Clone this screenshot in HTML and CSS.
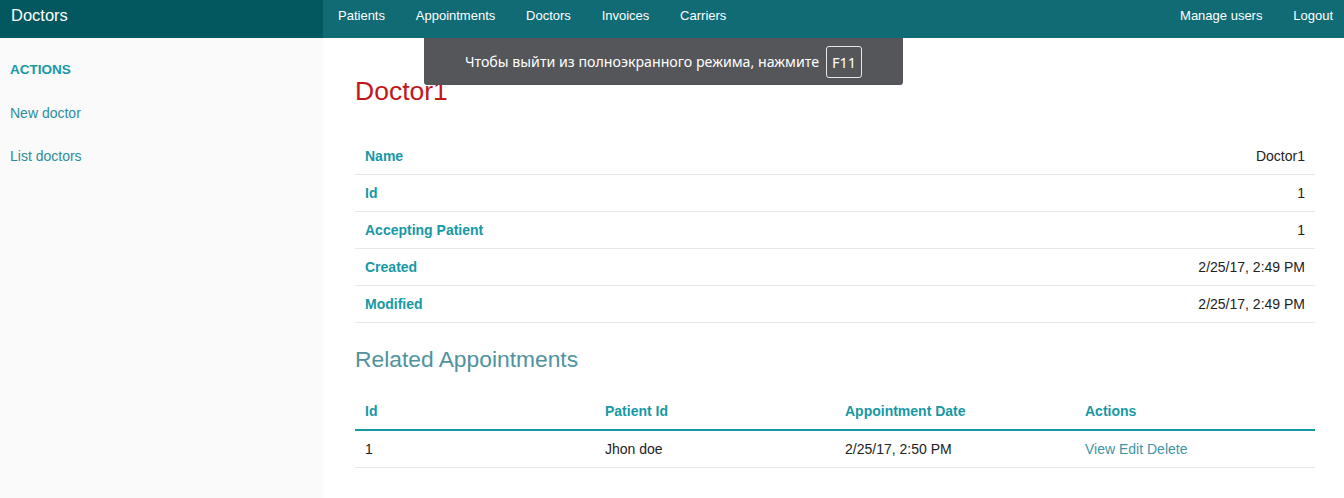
FILE: index.html
```html
<!DOCTYPE html>
<html lang="en">
<head>
<meta charset="utf-8">
<title>Doctors</title>
<link rel="stylesheet" href="styles.css">
</head>
<body>
<nav class="top-bar">
  <div class="title-area"><a href="#" class="brand">Doctors</a></div>
  <div class="top-bar-section">
    <ul class="nav-left">
      <li><a href="#">Patients</a></li>
      <li><a href="#">Appointments</a></li>
      <li><a href="#">Doctors</a></li>
      <li><a href="#">Invoices</a></li>
      <li><a href="#">Carriers</a></li>
    </ul>
    <ul class="nav-right">
      <li><a href="#">Manage users</a></li>
      <li><a href="#">Logout</a></li>
    </ul>
  </div>
</nav>
<div class="fs-bubble">
  <span>Чтобы выйти из полноэкранного режима, нажмите</span>
  <kbd class="key">F11</kbd>
</div>
<div class="container">
  <aside class="sidebar">
    <ul class="side-nav">
      <li class="heading">Actions</li>
      <li><a href="#">New doctor</a></li>
      <li><a href="#">List doctors</a></li>
    </ul>
  </aside>
  <main class="content">
    <h3 class="page-title">Doctor1</h3>
    <table class="vertical-table">
      <tr><th>Name</th><td>Doctor1</td></tr>
      <tr><th>Id</th><td>1</td></tr>
      <tr><th>Accepting Patient</th><td>1</td></tr>
      <tr><th>Created</th><td>2/25/17, 2:49 PM</td></tr>
      <tr><th>Modified</th><td>2/25/17, 2:49 PM</td></tr>
    </table>
    <section class="related">
      <h4 class="related-title">Related Appointments</h4>
      <table class="related-table">
        <thead>
          <tr><th>Id</th><th>Patient Id</th><th>Appointment Date</th><th>Actions</th></tr>
        </thead>
        <tbody>
          <tr>
            <td>1</td><td>Jhon doe</td><td>2/25/17, 2:50 PM</td>
            <td class="actions"><a href="#">View</a> <a href="#">Edit</a> <a href="#">Delete</a></td>
          </tr>
        </tbody>
      </table>
    </section>
  </main>
</div>
</body>
</html>
```

FILE: styles.css
```css
* { box-sizing: border-box; }
html, body { margin: 0; padding: 0; }
body {
  font-family: "Liberation Sans", Arial, Helvetica, sans-serif;
  font-size: 14px;
  color: #222;
  background: #fff;
  height: 498px;
  overflow: hidden;
}
a { text-decoration: none; }
ul { list-style: none; margin: 0; padding: 0; }

.top-bar {
  display: flex;
  height: 38px;
  background: #116b75;
}
.title-area {
  width: 323px;
  background: #03575f;
  padding-left: 11px;
}
.brand {
  color: #fff;
  font-size: 16.5px;
  line-height: 31px;
  display: block;
}
.top-bar-section {
  flex: 1;
  display: flex;
  justify-content: space-between;
}
.top-bar-section ul { display: flex; }
.top-bar-section a {
  display: block;
  color: #fff;
  font-size: 13px;
  line-height: 31px;
  padding: 0 15.4px;
}
.nav-left { margin-left: -0.4px; }
.nav-right { margin-right: -1px; }
.nav-right li:last-child a { padding-right: 12px; }

.fs-bubble {
  position: absolute;
  left: 424px;
  top: 38px;
  width: 479px;
  height: 47px;
  background: #54565a;
  border-radius: 0 0 3px 3px;
  display: flex;
  align-items: center;
  justify-content: center;
  gap: 7px;
  color: #fff;
  font-family: "Noto Sans", "Open Sans", sans-serif;
  font-size: 14.2px;
  padding-left: 0;
}
.key {
  font-family: "Noto Sans", "Open Sans", sans-serif;
  font-size: 14.5px;
  border: 1px solid #e6e6e6;
  border-radius: 3px;
  width: 36px;
  height: 32px;
  display: flex;
  align-items: center;
  justify-content: center;
}

.container {
  display: flex;
  height: 460px;
}
.sidebar {
  width: 323px;
  background: #fafafa;
  padding: 22px 10px 0;
}
.side-nav li {
  line-height: 20px;
  margin-bottom: 23px;
}
.side-nav .heading {
  color: #1798a5;
  font-weight: bold;
  text-transform: uppercase;
  font-size: 13.5px;
}
.side-nav a {
  color: #2b8d9d;
  font-size: 14px;
}

.content {
  flex: 1;
  padding: 36px 29px 0 32px;
}
.page-title {
  margin: 0 0 30px;
  font-weight: normal;
  font-size: 26.5px;
  line-height: 34px;
  color: #c3161b;
}
table {
  width: 100%;
  border-collapse: collapse;
}
.vertical-table th,
.vertical-table td {
  padding: 8px 10px;
  line-height: 20px;
  border-bottom: 1px solid #e8e8e8;
  font-size: 14px;
}
.vertical-table th {
  text-align: left;
  color: #1798a5;
  font-weight: bold;
}
.vertical-table td {
  text-align: right;
  color: #222;
}

.related-title {
  margin: 21px 0 19px;
  font-weight: normal;
  font-size: 22.8px;
  line-height: 30px;
  color: #4f939f;
}
.related-table {
  table-layout: fixed;
}
.related-table th,
.related-table td {
  text-align: left;
  padding: 8px 10px;
  line-height: 20px;
  font-size: 14px;
}
.related-table th {
  color: #1798a5;
  font-weight: bold;
  border-bottom: 2px solid #1798a5;
}
.related-table td {
  border-bottom: 1px solid #e8e8e8;
  color: #222;
}
.related-table .actions a {
  color: #3f95a6;
}
```
